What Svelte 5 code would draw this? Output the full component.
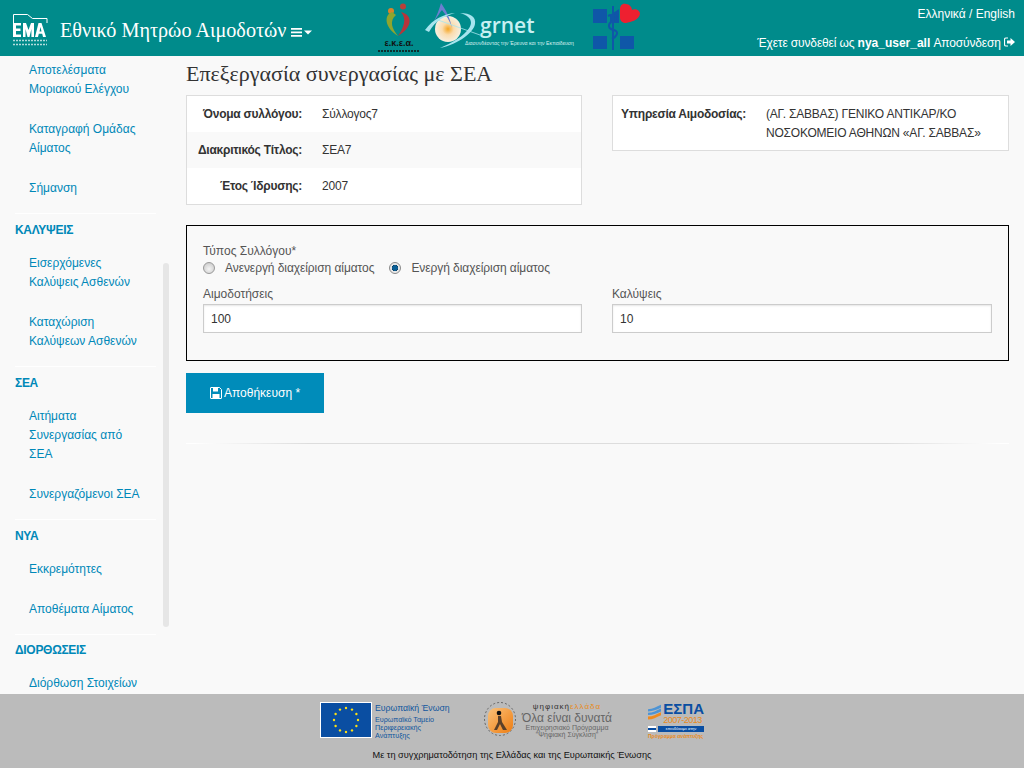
<script>
  const menu = [
    { items: [['Αποτελέσματα', 'Μοριακού Ελέγχου'], ['Καταγραφή Ομάδας', 'Αίματος'], ['Σήμανση']] },
    { title: 'ΚΑΛΥΨΕΙΣ', items: [['Εισερχόμενες', 'Καλύψεις Ασθενών'], ['Καταχώριση', 'Καλύψεων Ασθενών']] },
    { title: 'ΣΕΑ', items: [['Αιτήματα', 'Συνεργασίας από', 'ΣΕΑ'], ['Συνεργαζόμενοι ΣΕΑ']] },
    { title: 'ΝΥΑ', items: [['Εκκρεμότητες'], ['Αποθέματα Αίματος']] },
    { title: 'ΔΙΟΡΘΩΣΕΙΣ', items: [['Διόρθωση Στοιχείων']] }
  ];
  const details = [
    ['Όνομα συλλόγου:', 'Σύλλογος7'],
    ['Διακριτικός Τίτλος:', 'ΣΕΑ7'],
    ['Έτος Ίδρυσης:', '2007']
  ];
</script>

<div class="page">
  <header class="topbar">
    <div class="brand">
      <svg class="ema" width="36" height="36" viewBox="0 0 36 36">
        <path d="M1.500 10V1.500h14l5 4h14.500V10" fill="none" stroke="#fff" stroke-width="1" />
        <path d="M1 10h8v2.500H4v3h4.500V18H4v3.500h5V24H1zM11 24V10h3l2.500 7 2.500-7h3v14h-2.600v-8L17.500 24h-2l-2-8v8zM23 24l3.500-14h3L34 24h-3l-.8-3.300h-3.400L26 24zM27.500 18.500h2l-1-4.500z" fill="#fff" />
        <path d="M1 27.500h34M1 31.500h34" stroke="#fff" stroke-width="1.500" stroke-dasharray="2 1" opacity=".7" />
      </svg>
      <span class="site-title">Εθνικό Μητρώο Αιμοδοτών</span>
      <svg class="burger" width="21" height="9" viewBox="0 0 21 9">
        <path d="M0 0h11v1.800H0zM0 3.500h11v1.800H0zM0 7h11v1.800H0zM13 2.500h8l-4 4z" fill="#fff" />
      </svg>
    </div>
    <div class="logos">
      <svg width="46" height="52" viewBox="0 0 46 52">
        <circle cx="14" cy="8" r="3" fill="#d8842a" />
        <circle cx="26" cy="3.500" r="3" fill="#b8403a" />
        <path d="M15 9C7 12 7 24 21 33 15 26 12 18 19 12z" fill="#8fa52e" />
        <path d="M24 9C36 12 36 24 21 33 27 24 30 16 24 9z" fill="#b8343a" />
        <text x="22" y="43" class="seea">ε.κ.ε.α.</text>
        <path d="M1 48h41" stroke="#111" stroke-width="1.500" stroke-dasharray="2 1" />
      </svg>
      <svg width="157" height="52" viewBox="0 0 157 52" class="grnet">
        <defs>
          <radialGradient id="sun">
            <stop offset="0" stop-color="#f5a623" />
            <stop offset=".45" stop-color="#fbdcae" />
            <stop offset="1" stop-color="#f6efe0" />
          </radialGradient>
        </defs>
        <circle cx="25" cy="26" r="13" fill="url(#sun)" />
        <path d="M18 0C16 7 14 12 11 18 15 13 17 9 19 7 23 12 27 18 29 25 27 15 23 7 18 0z" fill="#6c7fd0" />
        <path d="M2 27C10 16 21 11 32 10 21 13 12 18 6 29zM37 10C48 10 53 14 52 21 51 29 36 41 17 45 32 39 47 29 48 20 48 15 44 12 37 10z" fill="#a6e4ee" />
        <path d="M15 17l42 15" stroke="#a6e4ee" stroke-width=".8" />
        <text x="57" y="30" class="grnet-name">grnet</text>
        <text x="42" y="42" class="grnet-sub">Διασυνδέοντας την Έρευνα και την Εκπαίδευση</text>
      </svg>
      <svg class="cross" width="47" height="48" viewBox="0 0 47 48">
        <path d="M0 6h14v14H0zM0 33h14v13H0zM27 33h14v13H27z" fill="#0f57a8" />
        <path d="M17 12l9-6v14h-9z" fill="#0f57a8" />
        <path d="M33 1c-4-1-6 2-6 5v9c0 3 3 5 6 5 5-1 13-3 14-9 0-4-5-6-8-4 0-3-3-6-6-6z" fill="#ee2030" />
        <path d="M20 3v44M15 13c6-3 12 1 5 5-6 3-5 8 1 9 6 2 2 7-2 9" fill="none" stroke="#0f57a8" stroke-width="2" />
      </svg>
    </div>
    <div class="account">
      <div class="lang">Ελληνικά / English</div>
      <div class="user">
        Έχετε συνδεθεί ως <b>nya_user_all</b> Αποσύνδεση
        <svg width="11" height="10" viewBox="0 0 11 10">
          <path d="M4 1H2a1.500 1.500 0 0 0-1.500 1.500v5A1.500 1.500 0 0 0 2 9h2" fill="none" stroke="#fff" stroke-width="1.200" />
          <path d="M3 3.500h3.500V1L11 5 6.500 9V6.500H3z" fill="#fff" />
        </svg>
      </div>
    </div>
  </header>

  <div class="body">
    <nav class="sidebar">
      <div class="menu">
        {#each menu as group}
          <section class="group">
            {#if group.title}
              <h5>{group.title}</h5>
            {/if}
            <ul>
              {#each group.items as lines}
                <li>
                  {#each lines as line}
                    <a href="#top">{line}</a>
                  {/each}
                </li>
              {/each}
            </ul>
          </section>
        {/each}
      </div>
      <div class="scrollbar"></div>
    </nav>

    <main class="content">
      <h3>Επεξεργασία συνεργασίας με ΣΕΑ</h3>

      <div class="info-row">
        <dl class="panel assoc">
          {#each details as row}
            <div class="row">
              <dt>{row[0]}</dt>
              <dd>{row[1]}</dd>
            </div>
          {/each}
        </dl>
        <dl class="panel service">
          <div class="row">
            <dt>Υπηρεσία Αιμοδοσίας:</dt>
            <dd>(ΑΓ. ΣΑΒΒΑΣ) ΓΕΝΙΚΟ ΑΝΤΙΚΑΡ/ΚΟ ΝΟΣΟΚΟΜΕΙΟ ΑΘΗΝΩΝ «ΑΓ. ΣΑΒΒΑΣ»</dd>
          </div>
        </dl>
      </div>

      <form class="form-box" onsubmit={(e) => e.preventDefault()}>
        <div class="type-label">Τύπος Συλλόγου*</div>
        <div class="radios">
          <label><input type="radio" name="type" /> Ανενεργή διαχείριση αίματος</label>
          <label><input type="radio" name="type" checked /> Ενεργή διαχείριση αίματος</label>
        </div>
        <div class="fields">
          <label class="field">
            Αιμοδοτήσεις
            <input type="text" value="100" />
          </label>
          <label class="field">
            Καλύψεις
            <input type="text" value="10" />
          </label>
        </div>
      </form>

      <button class="save" type="button">
        <svg width="12" height="12" viewBox="0 0 12 12">
          <path d="M1 .5h8.500L11.500 2.500V11a.5.5 0 0 1-.5.5H1a.5.5 0 0 1-.5-.5V1A.5.5 0 0 1 1 .5z" fill="none" stroke="#fff" />
          <path d="M3 1h5v3.500H3zM2.500 7h7v4h-7z" fill="#fff" />
        </svg>
        Αποθήκευση *
      </button>

      <hr />
    </main>
  </div>

  <footer class="funding">
    <div class="funding-logos">
      <div class="eu">
        <svg width="52" height="36" viewBox="0 0 52 36">
          <rect width="52" height="36" fill="#fff" />
          <rect x="1" y="1" width="50" height="34" fill="#0a4ea2" />
          {#each Array(12) as _, i}
            <circle
              cx={26 + 12 * Math.sin((i * Math.PI) / 6)}
              cy={18 - 12 * Math.cos((i * Math.PI) / 6)}
              r="1.200"
              fill="#ffe014"
            />
          {/each}
        </svg>
        <div class="eu-text">
          <strong>Ευρωπαϊκή Ένωση</strong>
          <span>Ευρωπαϊκό Ταμείο</span>
          <span>Περιφερειακής</span>
          <span>Ανάπτυξης</span>
        </div>
      </div>
      <div class="digital">
        <svg width="32" height="34" viewBox="0 0 32 34">
          <defs>
            <linearGradient id="blob" x1="0" y1="0" x2="1" y2="1">
              <stop offset="0" stop-color="#fbc27a" />
              <stop offset="1" stop-color="#ee7d12" />
            </linearGradient>
          </defs>
          <ellipse cx="16" cy="17" rx="15.500" ry="16.500" fill="none" stroke="#666" stroke-dasharray="2 2" />
          <rect x="4" y="6" width="25" height="25" rx="8" fill="url(#blob)" />
          <circle cx="15" cy="11" r="2.300" fill="#111" />
          <path d="M14 14h3l1 6 5 8h-4l-3-6-3 6h-3l4-8z" fill="#5b4029" />
        </svg>
        <div class="digital-text">
          <span class="d1">ψηφιακή<em>ελλάδα</em></span>
          <span class="d2">Όλα είναι δυνατά</span>
          <span class="d3">Επιχειρησιακό Πρόγραμμα</span>
          <span class="d3">"Ψηφιακή Σύγκλιση"</span>
        </div>
      </div>
      <div class="espa">
        <div class="espa-top">
          <svg width="18" height="21" viewBox="0 0 18 21">
            <path d="M0 6C7 6 11 3 18 0v4C11 7 7 9 0 9zM0 11c7 0 11-3 18-6v4c-7 3-11 5-18 5z" fill="#4d94d5" />
            <path d="M0 16c7 0 11-3 18-6v4c-7 3-11 6-18 6z" fill="#f08a1d" />
          </svg>
          <div class="espa-text">
            <b>ΕΣΠΑ</b>
            <i>2007-2013</i>
          </div>
        </div>
        <div class="espa-bar-row">
          <span class="flag"></span>
          <span class="espa-bar">επενδύουμε στην</span>
        </div>
        <span class="espa-foot">Πρόγραμμα ανάπτυξης</span>
      </div>
    </div>
    <p>Με τη συγχρηματοδότηση της Ελλάδας και της Ευρωπαικής Ένωσης</p>
  </footer>
</div>

<style>
  :global(body) {
    margin: 0;
    background: #f9f9f9;
    font-family: "Liberation Sans", Arial, sans-serif;
    color: #333;
  }

  .page {
    height: 768px;
    display: flex;
    flex-direction: column;
    overflow: hidden;
  }

  .topbar {
    height: 56px;
    flex: none;
    background: #008b8b;
    color: #fff;
    display: flex;
  }

  .brand {
    display: flex;
    align-items: center;
    width: 377px;
    padding: 4px 0 0 12px;
    box-sizing: border-box;
    flex: none;
  }

  .ema {
    flex: none;
    margin-top: 2px;
  }

  .site-title {
    font-family: "Liberation Serif", serif;
    font-size: 20.200px;
    margin-left: 12px;
    white-space: nowrap;
  }

  .burger {
    margin: 4px 0 0 4px;
    flex: none;
  }

  .logos {
    display: flex;
    align-items: flex-start;
    padding-top: 3px;
  }

  .seea {
    font: bold 9px "Liberation Sans", sans-serif;
    text-anchor: middle;
    fill: #111;
  }

  .grnet-name {
    font: 600 21px "Open Sans", sans-serif;
    fill: #c8f0f2;
  }

  .grnet-sub {
    font: 5.200px "Liberation Sans", sans-serif;
    fill: #d8f0f0;
  }

  .cross {
    margin-left: 13px;
  }

  .account {
    margin-left: auto;
    padding: 7px 9px 0 0;
    text-align: right;
    font-size: 12px;
  }

  .lang {
    line-height: 14px;
  }

  .user {
    margin-top: 15px;
    line-height: 14px;
    letter-spacing: -0.15px;
  }

  .user b {
    letter-spacing: 0;
  }

  .body {
    flex: 1;
    display: flex;
    min-height: 0;
  }

  .sidebar {
    width: 186px;
    flex: none;
    height: 638px;
    overflow: hidden;
    position: relative;
  }

  .menu {
    margin-top: -2px;
  }

  .group {
    margin-left: 15px;
    width: 141px;
    border-bottom: 1px solid #fff;
    padding-bottom: 1px;
  }

  .group:last-child h5 {
    padding-top: 8px;
  }

  h5 {
    margin: 0 0 10px;
    padding-top: 9px;
    font-size: 12px;
    line-height: 14px;
    font-weight: bold;
    letter-spacing: -0.3px;
    color: #0088b8;
  }

  ul {
    list-style: none;
    margin: 0;
    padding: 0;
  }

  li {
    padding: 7px 0 14px 14px;
    width: 115px;
  }

  a {
    display: block;
    color: #0088b8;
    text-decoration: none;
    font-size: 12px;
    line-height: 19px;
    white-space: nowrap;
  }

  .scrollbar {
    position: absolute;
    right: 17px;
    top: 207px;
    width: 6px;
    height: 364px;
    background: #e6e6e6;
    border-radius: 3px;
  }

  .content {
    flex: 1;
    padding: 0 15px 0 0;
    min-width: 0;
  }

  h3 {
    margin: 3px 0 7px;
    font-family: "Liberation Serif", serif;
    font-weight: normal;
    font-size: 22px;
    line-height: 29px;
    color: #333;
  }

  .info-row {
    display: flex;
    gap: 30px;
    align-items: flex-start;
  }

  dl {
    margin: 0;
  }

  .panel {
    background: #fff;
    border: 1px solid #ddd;
    font-size: 12px;
    box-sizing: border-box;
  }

  .assoc {
    width: 396px;
  }

  .service {
    flex: 1;
  }

  .row {
    display: flex;
  }

  .assoc .row {
    height: 36px;
    align-items: center;
  }

  .assoc .row:nth-child(2) {
    background: #f9f9f9;
  }

  dt {
    font-weight: bold;
    text-align: right;
    letter-spacing: -0.25px;
    color: #333;
    width: 115px;
    flex: none;
  }

  dd {
    margin: 0 0 0 20px;
    letter-spacing: -0.2px;
    color: #333;
  }

  .service .row {
    padding: 9px 0 7px;
    line-height: 19px;
  }

  .service dt {
    width: 133px;
  }

  .form-box {
    margin-top: 20px;
    height: 136px;
    box-sizing: border-box;
    border: 1px solid #000;
    padding: 18px 16px 0;
    font-size: 12px;
    color: #555;
  }

  .type-label {
    line-height: 15px;
  }

  .radios {
    display: flex;
    gap: 15px;
    line-height: 16px;
    margin-top: 1px;
    letter-spacing: -0.07px;
  }

  .radios label {
    display: flex;
    align-items: center;
  }

  .radios input {
    appearance: none;
    width: 12px;
    height: 12px;
    margin: -1px 10px 0 0;
    border-radius: 50%;
    border: 1px solid #999;
    box-sizing: border-box;
    background: radial-gradient(circle at 50% 60%, #f4f4f4, #c4c4c4);
  }

  .radios input:checked {
    border-color: #8a8a8a;
    background: radial-gradient(circle, #0b5f96 0 2.500px, #093a5c 3px, #e6e6e6 3.500px, #f2f2f2);
  }

  .fields {
    display: flex;
    gap: 30px;
    margin-top: 11px;
  }

  .field {
    width: 379px;
    display: flex;
    flex-direction: column;
    line-height: 15px;
  }

  .field + .field {
    width: 380px;
  }

  .field input {
    height: 29px;
    margin-top: 2px;
    box-sizing: border-box;
    border: 1px solid #ccc;
    padding: 0 7px;
    font: 12px "Liberation Sans", sans-serif;
    color: #333;
    background: #fff;
    box-shadow: inset 0 1px 2px rgba(0, 0, 0, 0.1);
  }

  .save {
    display: flex;
    align-items: center;
    justify-content: center;
    gap: 2px;
    margin-top: 12px;
    width: 138px;
    height: 40px;
    border: none;
    background: #008cba;
    color: #fff;
    font: 12px "Liberation Sans", sans-serif;
  }

  hr {
    margin: 30px 0 0;
    border: none;
    height: 1px;
    background: linear-gradient(to right, #fff, #fff 1%, #ddd 15%, #ddd 85%, #fff 99%, #fff);
  }

  .funding {
    height: 74px;
    flex: none;
    background: #bbb;
    display: flex;
    flex-direction: column;
    align-items: center;
  }

  .funding-logos {
    display: flex;
    height: 46px;
    padding-top: 8px;
    box-sizing: border-box;
    align-items: flex-start;
  }

  .funding p {
    margin: 9px 0 0;
    font-size: 9.200px;
    line-height: 12px;
    color: #111;
  }

  .eu {
    display: flex;
    gap: 3px;
  }

  .eu-text {
    display: flex;
    flex-direction: column;
    padding-top: 1px;
    color: #10569e;
    font-size: 7.200px;
    line-height: 8px;
    width: 78px;
  }

  .eu-text strong {
    font-weight: normal;
    font-size: 8.700px;
    line-height: 11px;
    margin-bottom: 2px;
    white-space: nowrap;
  }

  .digital {
    display: flex;
    gap: 4px;
    margin-left: 31px;
  }

  .digital-text {
    display: flex;
    flex-direction: column;
    align-items: center;
    width: 94px;
    color: #666;
    white-space: nowrap;
  }

  .d1 {
    font-size: 8px;
    line-height: 10px;
    letter-spacing: 1px;
    color: #333;
  }

  .d1 em {
    font-style: normal;
    color: #e88a1a;
  }

  .d2 {
    font-size: 12px;
    line-height: 12px;
  }

  .d3 {
    font-size: 7px;
    line-height: 7px;
  }

  .espa {
    display: flex;
    flex-direction: column;
    margin-left: 34px;
    width: 56px;
    white-space: nowrap;
  }

  .espa-top {
    display: flex;
    gap: 2px;
  }

  .espa-text {
    display: flex;
    flex-direction: column;
  }

  .espa-text b {
    font-size: 15px;
    line-height: 13px;
    color: #0a4ea2;
  }

  .espa-text i {
    font-style: normal;
    font-size: 9px;
    line-height: 10px;
    letter-spacing: -0.5px;
    color: #e88a1a;
  }

  .espa-bar-row {
    display: flex;
    gap: 2px;
    margin-top: 1px;
    height: 6px;
  }

  .flag {
    width: 8px;
    background: linear-gradient(#fff 0 2px, #0a4ea2 2px 4px, #fff 4px);
  }

  .espa-bar {
    flex: 1;
    background: #0a4ea2;
    color: #fff;
    font-size: 4px;
    line-height: 6px;
    text-align: center;
  }

  .espa-foot {
    color: #e88a1a;
    font-size: 5px;
    line-height: 8px;
    font-weight: bold;
  }
</style>
